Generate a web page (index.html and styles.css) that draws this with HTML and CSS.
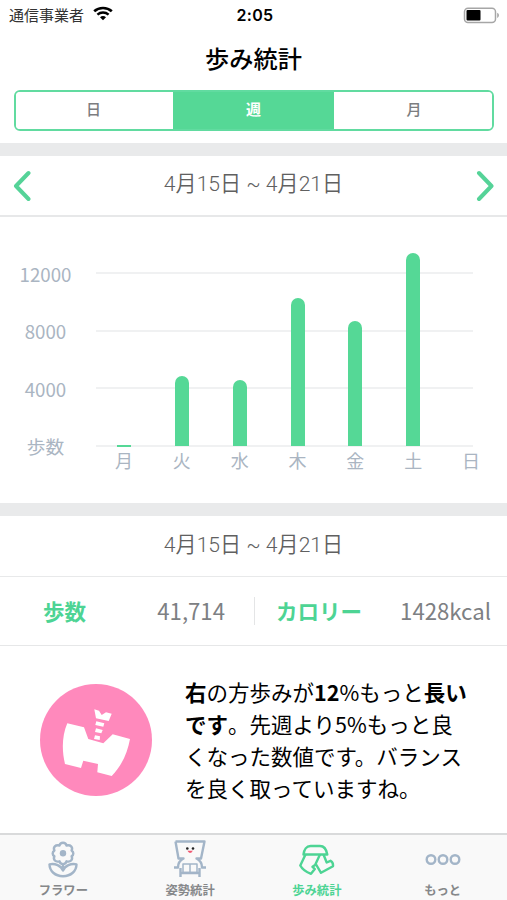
FILE: index.html
```html
<!DOCTYPE html>
<html lang="ja">
<head>
    <meta charset="UTF-8">
    <meta name="viewport" content="width=device-width, initial-scale=1.0">
    <title>歩み統計</title>
    <link rel="stylesheet" href="styles.css">
</head>
<body>
    <div class="app">
        <div class="status-bar">
            <div class="carrier">
                <span>通信事業者</span>
                <svg class="wifi" width="20" height="15" viewBox="0 0 20 15">
                    <path d="M1.2 5.2C6 .9 14 .9 18.8 5.2" fill="none" stroke="#000" stroke-width="2.7"/>
                    <path d="M4.4 8.6c3.2-2.7 8-2.7 11.2 0" fill="none" stroke="#000" stroke-width="2.5"/>
                    <path d="M7 11.2c1.7-1.5 4.3-1.5 6 0l-3 3z"/>
                </svg>
            </div>
            <div class="time">2:05</div>
            <svg class="battery" width="37" height="17" viewBox="0 0 37 17">
                <rect x="1.5" y="1.2" width="31" height="14.3" rx="3.5" fill="#fff" stroke="#a6a6a6" stroke-width="1.5"/>
                <rect x="3.5" y="3.1" width="14" height="10.4" rx="1"/>
                <path d="M34.2 5.8c2.3.8 2.3 4.3 0 5.1z" fill="#a6a6a6"/>
            </svg>
        </div>

        <h1>歩み統計</h1>
        <div class="segments">
            <button>日</button>
            <button class="active">週</button>
            <button>月</button>
        </div>

        <div class="date-nav">
            <svg width="18" height="32" viewBox="0 0 18 32"><path d="M15.5 3 3 16l12.5 13"/></svg>
            <span class="date">4月15日 ~ 4月21日</span>
            <svg width="18" height="32" viewBox="0 0 18 32"><path d="m3 3 12.5 13L3 29"/></svg>
        </div>

        <div class="chart">
            <div class="y-axis">
                <span>12000</span>
                <span>8000</span>
                <span>4000</span>
                <span>歩数</span>
            </div>
            <div class="plot">
                <div class="grid-lines"><i></i><i></i><i></i><i></i></div>
                <div class="bars">
                    <div class="day"><div class="bar empty"></div><span>月</span></div>
                    <div class="day"><div class="bar" style="height: 70px"></div><span>火</span></div>
                    <div class="day"><div class="bar" style="height: 65.5px"></div><span>水</span></div>
                    <div class="day"><div class="bar" style="height: 147.5px"></div><span>木</span></div>
                    <div class="day"><div class="bar" style="height: 125px"></div><span>金</span></div>
                    <div class="day"><div class="bar" style="height: 193px"></div><span>土</span></div>
                    <div class="day"><span>日</span></div>
                </div>
            </div>
        </div>

        <div class="summary-date"><span class="date">4月15日 ~ 4月21日</span></div>
        <div class="totals">
            <div class="total steps"><b>歩数</b><span>41,714</span></div>
            <div class="total calories"><b>カロリー</b><span>1428kcal</span></div>
        </div>

        <div class="advice">
            <svg width="112" height="112" viewBox="0 0 112 112">
                <circle cx="56" cy="56" r="56" fill="#ff89bc"/>
                <path fill="#fff" d="M27.3 39.3 44 43.3l4.3 11.7 15 4.3 9.4-9L90 55C87.5 69 81.5 82 71.7 92l-14.400-3.700.7-8.300-14.700-3.300L41 84l-16-4c-3.200-13-3.200-28 2.300-40.700z"/>
                <path fill="#fff" d="m54.3 25.3 4.700 1.400 2.700 4.300 4.300-2.700 5.700 1.400-3 7.300L56 34.300z"/>
                <path fill="#fff" d="m56.3 37.3 8 2-1 3.400-8-1.700zM56 44.300l6.700 1.700-1.400 3.300-6.300-1.300zM55 51.300l5 1-.3 3.700-5.700-1z"/>
            </svg>
            <p><b>右</b>の方歩みが<b>12</b>%もっと<b>長い<br>です</b>。先週より5%もっと良<br>くなった数値です。バランス<br>を良く取っていますね。</p>
        </div>

        <div class="tab-bar">
            <div class="tab">
                <svg width="36" height="38" viewBox="0 0 36 38">
                    <path d="M14.500 5.500c.8-3.700 6.200-3.700 7 0 4-1.200 6.700 1.700 5.100 5 2.300 1.700 2.300 4.100 0 5.800 1.600 3.300-1.100 6.200-5.100 5-.8 3.700-6.200 3.700-7 0-4 1.200-6.700-1.700-5.100-5-2.300-1.700-2.300-4.100 0-5.800-1.600-3.300 1.100-6.200 5.100-5z"/>
                    <circle cx="18" cy="13.200" r="3.200" class="fill"/>
                    <path d="M18 24v5M18 30.500C16 25.500 10 23 4.500 24.300 4.500 31 10 36.200 18 36.200S31.500 31 31.500 24.300C26 23 20 25.500 18 30.500z"/>
                </svg>
                <span>フラワー</span>
            </div>
            <div class="tab">
                <svg width="36" height="38" viewBox="0 0 36 38">
                    <path d="M3.500 1.500h29L29 18.500h-4.500c4 2 5.500 5 5.500 9h4M3.500 1.500 6.500 18.500h5C7.500 20.500 6 23.500 6 27.500H2M8.500 28V37M27.500 28V37M8.500 33h19"/>
                    <path d="M11 24h7v8.500h-7zM18 24h7v8.500h-7z" class="thin"/>
                    <circle cx="15.300" cy="8.500" r="1.300" class="eye"/><circle cx="21" cy="8.500" r="1.300" class="eye"/>
                    <path d="M16 10.800c.6 2.100 3.700 2.100 4.300 0" class="mouth"/>
                </svg>
                <span>姿勢統計</span>
            </div>
            <div class="tab active">
                <svg width="36" height="38" viewBox="0 0 36 38">
                    <path d="M4.500 14.500C5 10 7.500 6 11.500 6h9.500c4 0 6.500 4 7.300 8.500z"/>
                    <path d="M6.500 14.500 1.300 25.500c1.800 3.500 5.800 6.500 10.700 8.300l3.800-4.800-2.300-2.200 2.600-1.800L21 14.500M16.500 23.500l5.500 9.300L34 26.200c.3-2.500-.6-4.300-2.500-5.400l-3.800 1.700L24.500 14.500"/>
                </svg>
                <span>歩み統計</span>
            </div>
            <div class="tab more">
                <svg width="36" height="38" viewBox="0 0 36 38">
                    <circle cx="6" cy="19.500" r="4.300"/><circle cx="18" cy="19.500" r="4.300"/><circle cx="30" cy="19.500" r="4.300"/>
                </svg>
                <span>もっと</span>
            </div>
        </div>
    </div>
</body>
</html>
```
FILE: styles.css
```css
* {
    margin: 0;
    padding: 0;
    box-sizing: border-box;
}
body {
    background: #fff;
    font-family: 'Noto Sans CJK JP', sans-serif;
    color: #000;
}
svg {
    display: block;
    flex-shrink: 0;
}
.app {
    width: 507px;
    height: 900px;
    display: flex;
    flex-direction: column;
    overflow: hidden;
}
.status-bar {
    display: grid;
    grid-template-columns: 1fr auto 1fr;
    align-items: center;
    height: 30px;
    padding: 0 7px 0 9px;
}
.carrier {
    display: flex;
    gap: 9px;
    font-size: 15px;
    line-height: 20px;
    color: #333;
}
.wifi {
    margin-top: 1px;
}
.time {
    padding-left: 1px;
    font-family: Inter, sans-serif;
    font-size: 16px;
    font-weight: 600;
    letter-spacing: 0.3px;
}
.battery {
    justify-self: end;
}
h1 {
    height: 60px;
    font-size: 24.2px;
    font-weight: 500;
    line-height: 56px;
    text-align: center;
}
.segments {
    display: flex;
    height: 41px;
    margin: 0 13px 0 14px;
    border: 2px solid #61dba0;
    border-radius: 6px;
    overflow: hidden;
}
.segments button {
    flex: 1;
    border: none;
    background: #fff;
    color: #7c7d80;
    font-family: inherit;
    font-size: 15px;
    font-weight: 500;
    line-height: 32px;
    padding: 0 0 3px 2px;
}
.segments button:first-child {
    flex: 0 0 157px;
    padding: 0 2px 3px 0;
}
.segments .active {
    flex: 0 0 161px;
    padding-left: 0;
    background: #55d896;
    color: #fff;
    font-weight: 700;
}
.date-nav {
    display: flex;
    justify-content: space-between;
    align-items: center;
    height: 74px;
    margin-top: 12px;
    padding: 0 13px;
    border-top: 13px solid #e9eaeb;
    border-bottom: 2px solid #e7e8e9;
}
.date-nav path {
    fill: none;
    stroke: #55d398;
    stroke-width: 4;
    stroke-linecap: round;
    stroke-linejoin: round;
}
.date {
    font-family: Roboto, 'Noto Sans CJK JP', sans-serif;
    font-size: 21.1px;
    line-height: 30px;
    font-weight: 350;
    color: #606060;
    padding-bottom: 3px;
}
.chart {
    display: flex;
    height: 286px;
    color: #aab5c2;
    font-size: 18.7px;
}
.y-axis {
    display: flex;
    flex-direction: column;
    width: 91px;
    padding-top: 27.5px;
    text-align: center;
}
.y-axis span {
    height: 57.5px;
    line-height: 57.5px;
}
.plot {
    display: grid;
    width: 405px;
    margin-left: 4px;
    padding-top: 55px;
    align-items: start;
}
.grid-lines, .bars {
    grid-area: 1 / 1;
}
.grid-lines {
    display: flex;
    flex-direction: column;
    gap: 55.5px;
    width: 377px;
    margin-left: 1px;
}
.grid-lines i {
    height: 2px;
    background: #f0f1f2;
}
.bars {
    display: flex;
    height: 204px;
    margin-top: -19.5px;
}
.day {
    flex: 1;
    display: flex;
    flex-direction: column;
    justify-content: flex-end;
    align-items: center;
}
.day span {
    font-size: 18px;
    height: 11px;
    line-height: 28px;
}
.bar {
    width: 14px;
    background: #55d896;
    border-radius: 7px 7px 0 0;
}
.bar.empty {
    height: 2px;
    margin-bottom: -1px;
    border-radius: 0;
}
.summary-date {
    display: flex;
    justify-content: center;
    align-items: center;
    height: 74px;
    border-top: 13px solid #e9eaeb;
    border-bottom: 1px solid #e8e9ea;
}
.totals {
    display: flex;
    align-items: center;
    height: 69px;
    border-bottom: 1px solid #e6e7e8;
}
.total {
    display: flex;
    justify-content: space-between;
    height: 28px;
    line-height: 28px;
    font-size: 21.5px;
}
.total b {
    color: #4dd494;
}
.total span {
    font-size: 22.2px;
    line-height: 26px;
    color: #7d8083;
}
.steps {
    width: 255px;
    padding: 0 29px 0 43px;
    border-right: 1px solid #e4e5e6;
}
.calories {
    flex: 1;
    padding: 0 16px 0 21px;
}
.advice {
    display: flex;
    flex: 1;
    padding: 30px 20px 0 40px;
}
.advice svg {
    margin-top: 8px;
}
.advice p {
    margin-left: 33px;
    font-size: 21.5px;
    line-height: 32px;
    white-space: nowrap;
}
.tab-bar {
    display: flex;
    height: 67px;
    background: #f9f9f9;
    border-top: 2px solid #d9dadb;
}
.tab {
    width: 25%;
    display: flex;
    flex-direction: column;
    align-items: center;
    padding-top: 5px;
    color: #86888a;
    font-size: 12.3px;
    font-weight: 700;
    line-height: 25px;
}
.tab svg {
    fill: none;
    stroke: #a3b5c8;
    stroke-width: 2.4;
    stroke-linejoin: round;
}
.tab .fill {
    fill: #a3b5c8;
    stroke: none;
}
.tab .thin {
    stroke-width: 1.5;
}
.tab .eye {
    fill: #222;
    stroke: none;
}
.tab .mouth {
    fill: #f0566f;
    stroke: #f0566f;
    stroke-width: 1;
}
.tab.active {
    color: #4dd494;
}
.tab.active svg {
    stroke: #4dd494;
}
.tab.more {
    padding-right: 2px;
}
```
